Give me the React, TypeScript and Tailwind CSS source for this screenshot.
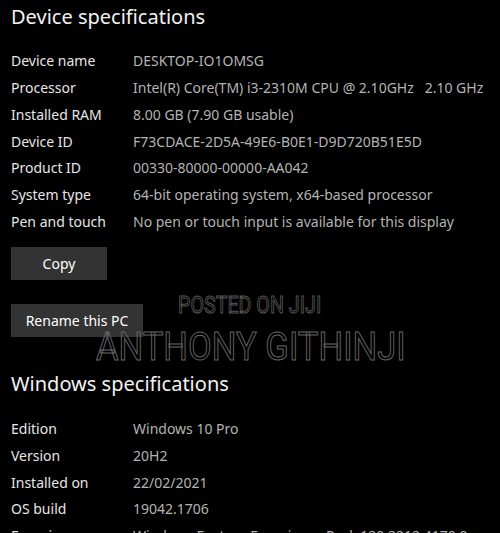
import React from 'react';

const device: [string, string][] = [
  ['Device name', 'DESKTOP-IO1OMSG'],
  ['Processor', 'Intel(R) Core(TM) i3-2310M CPU @ 2.10GHz\u00a0\u00a0\u00a02.10 GHz'],
  ['Installed RAM', '8.00 GB (7.90 GB usable)'],
  ['Device ID', 'F73CDACE-2D5A-49E6-B0E1-D9D720B51E5D'],
  ['Product ID', '00330-80000-00000-AA042'],
  ['System type', '64-bit operating system, x64-based processor'],
  ['Pen and touch', 'No pen or touch input is available for this display'],
];

const windows: [string, string][] = [
  ['Edition', 'Windows 10 Pro'],
  ['Version', '20H2'],
  ['Installed on', '22/02/2021'],
  ['OS build', '19042.1706'],
  ['Experience', 'Windows Feature Experience Pack 120.2212.4170.0'],
];

function SpecRows({ rows }: { rows: [string, string][] }) {
  return (
    <div className="flex flex-col">
      {rows.map(([label, value]) => (
        <div key={label} className="flex h-[26.7px] items-center text-[14px] whitespace-nowrap">
          <span className="w-[122px] shrink-0 text-[#e6e6e6]">{label}</span>
          <span className="text-[#b4b4b4]">{value}</span>
        </div>
      ))}
    </div>
  );
}

export default function App() {
  return (
    <div
      className="relative h-[533px] w-[500px] overflow-hidden bg-black px-[11px]"
      style={{ fontFamily: '"Noto Sans", "Open Sans", sans-serif' }}
    >
      <h1 className="pt-[3px] text-[20px] leading-[28px] text-[#f2f2f2]">Device specifications</h1>
      <div className="mt-[16.6px]">
        <SpecRows rows={device} />
      </div>

      <div className="mt-[12.4px] flex flex-col items-start gap-[24px]">
        <button className="flex h-[33px] w-[96px] items-center justify-center bg-[#333333] text-[14px] text-white">
          Copy
        </button>
        <button className="flex h-[33px] w-[132px] items-center justify-center bg-[#333333] text-[14px] text-white">
          Rename this PC
        </button>
      </div>

      <h2 className="mt-[33px] text-[20px] leading-[28px] text-[#f2f2f2]">Windows specifications</h2>
      <div className="mt-[17.6px]">
        <SpecRows rows={windows} />
      </div>

      {/* watermark */}
      <div
        className="pointer-events-none absolute left-[178px] top-[293px] text-[24px] leading-none text-transparent"
        style={{ WebkitTextStroke: '1px #555555', fontFamily: 'Roboto, sans-serif', transform: 'scaleX(0.82)', transformOrigin: 'left' }}
      >
        POSTED ON JIJI
      </div>
      <div
        className="pointer-events-none absolute left-[96px] top-[328px] text-[38px] leading-none text-transparent"
        style={{ WebkitTextStroke: '1px #666666', fontFamily: 'Roboto, sans-serif', transform: 'scaleX(0.91)', transformOrigin: 'left' }}
      >
        ANTHONY GITHINJI
      </div>
    </div>
  );
}
